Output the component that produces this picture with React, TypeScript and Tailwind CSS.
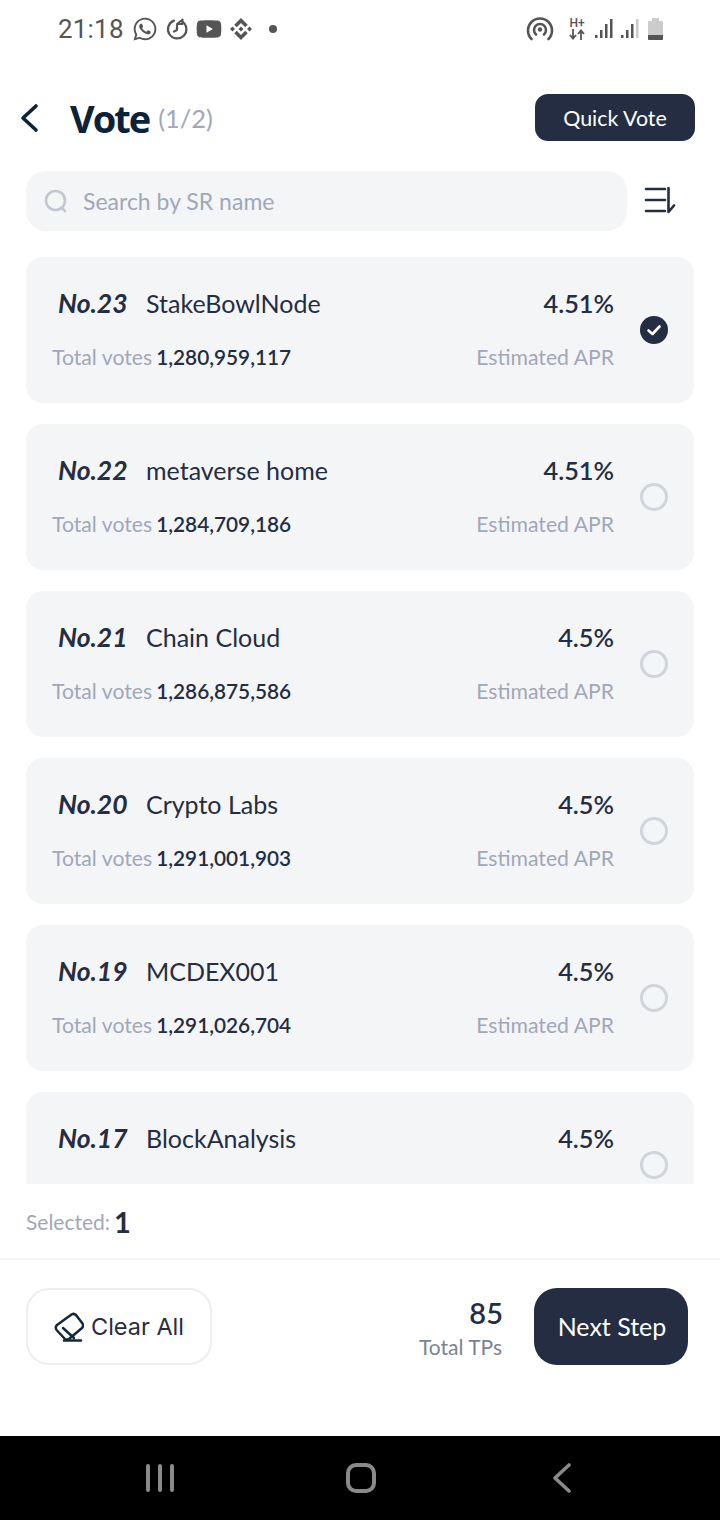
import { FaWhatsapp, FaYoutube } from 'react-icons/fa';
import { SiBinance } from 'react-icons/si';

const rows = [
  { no: 'No.23', name: 'StakeBowlNode', votes: '1,280,959,117', apr: '4.51%', checked: true },
  { no: 'No.22', name: 'metaverse home', votes: '1,284,709,186', apr: '4.51%' },
  { no: 'No.21', name: 'Chain Cloud', votes: '1,286,875,586', apr: '4.5%' },
  { no: 'No.20', name: 'Crypto Labs', votes: '1,291,001,903', apr: '4.5%' },
  { no: 'No.19', name: 'MCDEX001', votes: '1,291,026,704', apr: '4.5%' },
  { no: 'No.17', name: 'BlockAnalysis', apr: '4.5%' },
];

function Signal({ dim }: { dim?: boolean }) {
  return (
    <svg width="20" height="22" viewBox="0 0 20 22" fill="#555">
      <rect x="1" y="17" width="2.5" height="3" />
      <rect x="6" y="12" width="2.5" height="8" />
      <rect x="11" y="6" width="2.5" height="14" />
      <rect x="16" y="1" width="2.5" height="19" fill={dim ? '#ccc' : '#555'} />
    </svg>
  );
}

function StatusBar() {
  return (
    <div className="h-[58px] flex items-center justify-between pl-[58px] pr-[57px] text-[#555] shrink-0">
      <div className="flex items-center">
        <span className="font-['Roboto'] text-[26px] leading-none tracking-[0.2px]">21:18</span>
        <FaWhatsapp className="ml-[8px] w-[26px] h-[26px]" />
        <svg className="ml-[7px]" width="24" height="24" viewBox="0 0 24 24" fill="none" stroke="#555" strokeWidth="2.2" strokeLinecap="round" strokeLinejoin="round">
          <path d="M9 3.6a9.2 9.2 0 1 0 8 .8" />
          <path d="M12 8v5l-3 1.5" />
          <path d="M12 7l5-4M17.5 2.5v4.5h-4.5" strokeWidth="2" />
        </svg>
        <FaYoutube className="ml-[7px] w-[26px] h-[26px]" />
        <SiBinance className="ml-[8px] w-[22px] h-[22px]" />
        <span className="ml-[17px] w-[8px] h-[8px] rounded-full bg-[#555]" />
      </div>
      <div className="flex items-center">
        <svg width="28" height="28" viewBox="0 0 28 28" fill="none" stroke="#555" strokeWidth="2.6" strokeLinecap="round">
          <path d="M5.5 24a12 12 0 1 1 17 0" />
          <path d="M10 19.5a6 6 0 1 1 8 0" />
          <circle cx="14" cy="14.5" r="2.2" fill="#555" stroke="none" />
        </svg>
        <div className="ml-[15px] w-[16px] flex flex-col items-center">
          <span className="font-['Roboto'] text-[12px] font-medium leading-[11px]">H+</span>
          <svg width="16" height="11" viewBox="0 0 16 11" fill="none" stroke="#555" strokeWidth="1.8">
            <path d="M4 0v9M1 6l3 3.5L7 6M12 11V2M9 5l3-3.5L15 5" />
          </svg>
        </div>
        <div className="ml-[9px]"><Signal /></div>
        <div className="ml-[6px]"><Signal dim /></div>
        <div className="ml-[8px] w-[15px] h-[22px] flex flex-col items-center">
          <span className="w-[7px] h-[3px] bg-[#ccc]" />
          <span className="w-[15px] flex-1 bg-[#ccc] rounded-t-[1px] flex items-end">
            <span className="w-full h-[5px] bg-[#555] rounded-b-[1px]" />
          </span>
        </div>
      </div>
    </div>
  );
}

function Card({ no, name, votes, apr, checked }: { no: string; name: string; votes?: string; apr: string; checked?: boolean }) {
  return (
    <div className="h-[146px] shrink-0 rounded-[17px] bg-[#f4f5f7] flex items-center pl-[26px] pr-[26px]">
      <div className="flex-1 flex flex-col gap-[23px]">
        <div className="flex items-center justify-between h-[30px]">
          <div className="flex items-center">
            <span className="w-[94px] pl-[6px] italic font-bold text-[26.5px] text-[#242d42] leading-none">{no}</span>
            <span className="text-[25px] text-[#242d42] leading-none">{name}</span>
          </div>
          <span className="text-[25.3px] font-semibold text-[#242d42] leading-none">{apr}</span>
        </div>
        <div className="flex items-center justify-between h-[30px] pt-[2px]">
          {votes ? (
            <div className="flex items-center text-[21.2px] leading-none">
              <span className="text-[#a0a8b8]">Total votes</span>
              <span className="ml-[4px] text-[20.8px] font-semibold text-[#242d42]">{votes}</span>
            </div>
          ) : <div />}
          {votes && <span className="text-[21.2px] text-[#a0a8b8] leading-none">Estimated APR</span>}
        </div>
      </div>
      {checked ? (
        <div className="ml-[26px] w-[28px] h-[28px] rounded-full bg-[#242d42] flex items-center justify-center">
          <svg width="16" height="16" viewBox="0 0 16 16" fill="none" stroke="#fff" strokeWidth="2.6" strokeLinecap="round" strokeLinejoin="round">
            <path d="M2.5 8.5 6.5 12 13.5 4.5" />
          </svg>
        </div>
      ) : (
        <div className="ml-[26px] w-[28px] h-[28px] rounded-full border-[3px] border-[#d0d4db]" />
      )}
    </div>
  );
}

export default function App() {
  return (
    <div className="w-[720px] h-[1520px] bg-white flex flex-col overflow-hidden font-['Lato',sans-serif]">
      <StatusBar />

      <div className="h-[47px] mt-[36px] flex items-center justify-between pl-[20px] pr-[25px] shrink-0">
        <div className="flex items-center">
          <svg width="20" height="30" viewBox="0 0 20 30" fill="none" stroke="#0c2236" strokeWidth="3.6" strokeLinecap="round" strokeLinejoin="round">
            <path d="M16 3 3 15l13 12" />
          </svg>
          <span className="ml-[30px] text-[38px] font-bold text-[#0c2236] leading-none font-['Open_Sans'] tracking-[-2px]">Vote</span>
          <span className="ml-[9px] mt-[2px] text-[25.5px] text-[#a0a8b8] leading-none">(1/2)</span>
        </div>
        <button className="w-[160px] h-[47px] pt-[1px] rounded-[13px] bg-[#242d42] text-white text-[21.4px]">Quick Vote</button>
      </div>

      <div className="mt-[30px] flex items-center pl-[26px] shrink-0">
        <div className="w-[601px] h-[60px] rounded-[20px] bg-[#f4f5f7] flex items-center pl-[18px]">
          <svg width="24" height="24" viewBox="0 0 24 24" fill="none" stroke="#c3c8d0" strokeWidth="2.6" strokeLinecap="round">
            <circle cx="11.5" cy="11.5" r="9.5" />
            <path d="M18 19l3 3" />
          </svg>
          <span className="ml-[15px] text-[23px] text-[#a0a8b8] leading-none">Search by SR name</span>
        </div>
        <svg className="ml-[17px]" width="34" height="28" viewBox="0 0 34 28" fill="none" stroke="#242d42" strokeWidth="2.6" strokeLinecap="round" strokeLinejoin="round">
          <path d="M2 2h19M2 13h19M2 24h19" />
          <path d="M24.5 1v24l5.5-6.5" />
        </svg>
      </div>

      <div className="mt-[26px] h-[927px] mx-[26px] flex flex-col gap-[21px] overflow-hidden shrink-0">
        {rows.map(r => <Card key={r.no} {...r} />)}
      </div>

      <div className="h-[76px] flex items-center pl-[26px] border-b-2 border-[#f3f4f6] shrink-0">
        <span className="text-[21px] text-[#a0a8b8] leading-none">Selected:</span>
        <span className="ml-[4px] text-[29px] font-bold text-[#242d42] leading-none">1</span>
      </div>

      <div className="flex-1 flex items-start justify-between pl-[26px] pr-[32px] pt-[28px]">
        <button className="w-[186px] h-[77px] rounded-[23px] border-2 border-[#eceef1] flex items-center justify-center gap-[7px] text-[#242d42] text-[23.5px] font-['Inter']">
          <svg width="30" height="30" viewBox="0 0 30 30" fill="none" stroke="#14283c" strokeWidth="2.5" strokeLinecap="round" strokeLinejoin="round">
            <path d="M3 13 17.5 2.5Q20 1 22 3L28.5 11.5Q30 14 28 16L15 27Q13 28 11 27L3 18.5Q.5 15.5 3 13Z" />
            <path d="M9 16l11 10M10 28.5h17" />
          </svg>
          Clear All
        </button>
        <div className="flex items-center">
          <div className="flex flex-col items-end">
            <span className="-mr-[1px] mt-[4px] mb-[3px] text-[29px] font-semibold text-[#242d42] leading-[33px]">85</span>
            <span className="text-[21px] text-[#7a8394] leading-[30px]">Total TPs</span>
          </div>
          <button className="ml-[32px] w-[154px] h-[77px] pl-[2px] rounded-[23px] bg-[#242d42] text-white text-[25px]">Next Step</button>
        </div>
      </div>

      <div className="h-[84px] bg-black flex items-center justify-center pl-[2px] shrink-0">
        <div className="w-[201px] flex justify-center gap-[8px]">
          <span className="w-[4px] h-[28px] rounded-sm bg-[#8a8a8a]" />
          <span className="w-[4px] h-[28px] rounded-sm bg-[#8a8a8a]" />
          <span className="w-[4px] h-[28px] rounded-sm bg-[#8a8a8a]" />
        </div>
        <div className="w-[201px] flex justify-center">
          <span className="w-[30px] h-[30px] rounded-[10px] border-[4px] border-[#8a8a8a]" />
        </div>
        <div className="w-[201px] flex justify-center">
          <svg width="20" height="30" viewBox="0 0 20 30" fill="none" stroke="#8a8a8a" strokeWidth="3.6" strokeLinecap="round" strokeLinejoin="round">
            <path d="M17 2 3 15l14 13" />
          </svg>
        </div>
      </div>
    </div>
  );
}
